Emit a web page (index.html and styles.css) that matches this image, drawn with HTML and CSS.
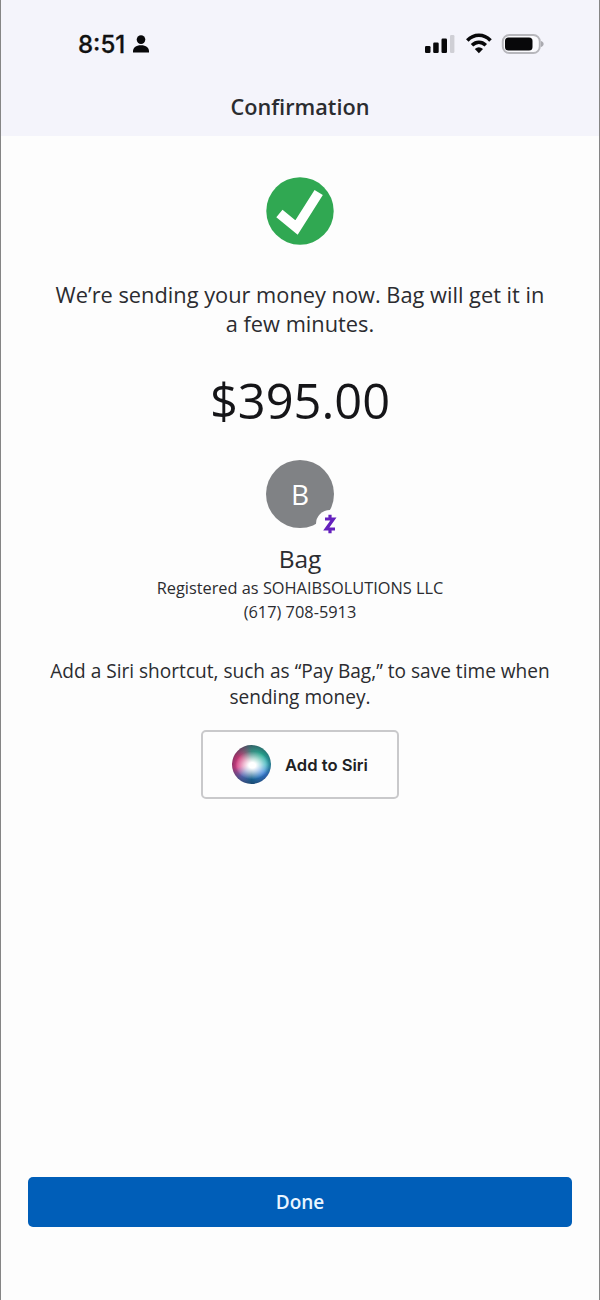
FILE: index.html
```html
<!DOCTYPE html>
<html lang="en">
<head>
<meta charset="utf-8">
<title>Confirmation</title>
<link rel="stylesheet" href="styles.css">
</head>
<body>
<div class="screen">
  <header class="header">
    <div class="status">
      <div class="clock">
        <span class="time">8:51</span>
        <svg class="person" width="18" height="18" viewBox="0 0 18 18"><circle cx="9" cy="4.600" r="4.300"/><path d="M1 17.500C.6 12.500 4 10.300 9 10.300S17.400 12.500 17 17.500Z"/></svg>
      </div>
      <svg class="indicators" width="122" height="24" viewBox="0 0 122 24">
        <rect x="1" y="14" width="5.500" height="7" rx="1.200"/>
        <rect x="9.200" y="10.500" width="5.500" height="10.500" rx="1.200"/>
        <rect x="17.500" y="6.500" width="5.500" height="14.500" rx="1.200"/>
        <rect class="dim" x="26" y="3" width="4.400" height="18" rx="1.200"/>
        <g class="waves"><path d="M43.300 8.400C50 1.600 59.800 1.600 66.500 8.400"/><path d="M48 13.300C52.300 9.300 57.500 9.300 61.800 13.300"/></g>
        <path d="M50.800 17Q54.900 13.400 59 17L54.900 21.200Z"/>
        <rect class="outline" x="78.800" y="3" width="37" height="18" rx="6.500"/>
        <rect x="81" y="5.500" width="27.500" height="13" rx="3.500"/>
        <path class="nub" d="M117 9V15C120.500 14 120.500 10 117 9Z"/>
      </svg>
    </div>
    <h1 class="title">Confirmation</h1>
  </header>
  <main class="content">
    <svg class="success" width="68" height="68" viewBox="0 0 68 68"><circle cx="34" cy="34" r="33.700" fill="#30a852"/><path d="M13.400 36.500L30.500 50.500L52.700 15.500" fill="none" stroke="#fff" stroke-width="9.800"/></svg>
    <p class="message">We’re sending your money now. Bag will get it in<br>a few minutes.</p>
    <p class="amount">$395.00</p>
    <div class="avatar">B
      <span class="badge"><svg width="14" height="20" viewBox="0 0 14 20"><path d="M2 5H10.400L3.300 15H12M7 .8V5M7 15V19.200" fill="none" stroke="#6420bd" stroke-width="3.200"/></svg></span>
    </div>
    <h2 class="name">Bag</h2>
    <p class="details">Registered as SOHAIBSOLUTIONS LLC<br>(617) 708-5913</p>
    <p class="hint">Add a Siri shortcut, such as “Pay Bag,” to save time when<br>sending money.</p>
    <button class="siri"><span class="orb"></span><span>Add to Siri</span></button>
  </main>
  <footer class="footer"><button class="done">Done</button></footer>
</div>
</body>
</html>
```
FILE: styles.css
```css
* { box-sizing: border-box; }
body { margin: 0; font-family: "Open Sans", sans-serif; color: #2b2c30; background: #fdfdfd; }
h1, h2, p { margin: 0; font-weight: 400; }
button { font: inherit; margin: 0; padding: 0; }
svg { display: block; }
.screen { width: 600px; height: 1300px; border: solid #858585; border-width: 0 1px; display: flex; flex-direction: column; background: #fdfdfd; }
.header { height: 136px; background: #f4f4fb; }
.status { display: flex; justify-content: space-between; align-items: center; height: 88px; padding: 0 53px 0 77px; }
.clock { display: flex; align-items: center; gap: 7px; color: #111; }
.time { font: 500 24px/30px Inter, sans-serif; -webkit-text-stroke: 0.300px; padding-top: 1px; }
.indicators, .person { fill: #08080a; }
.dim { fill: #cfcfd5; }
.waves { fill: none; stroke: #08080a; stroke-width: 3.600; }
.outline { fill: #fafafd; stroke: #b7b7bc; stroke-width: 2; }
.nub { fill: #aaaab0; }
.title { font-size: 21.700px; font-weight: 600; line-height: 38px; text-align: center; }
.content { flex: 1; display: flex; flex-direction: column; align-items: center; text-align: center; white-space: nowrap; padding-top: 41px; }
.message { margin-top: 35px; font-size: 21.800px; line-height: 29px; }
.amount { margin-top: 32px; font-size: 48.800px; line-height: 60px; color: #151518; }
.avatar { position: relative; width: 68px; height: 68px; margin-top: 30px; border-radius: 50%; background: #808285; color: #fff; font-size: 28px; line-height: 68px; }
.badge { position: absolute; left: 50px; top: 50px; width: 28px; height: 28px; border-radius: 50%; background: #fdfdfd; display: grid; place-items: center; }
.name { margin-top: 14px; font-size: 24.500px; line-height: 34px; }
.details { font-size: 16.350px; line-height: 24px; }
.hint { margin-top: 34px; font-size: 19.080px; line-height: 26px; }
.siri { display: flex; align-items: center; gap: 14px; width: 198px; height: 69px; margin-top: 20px; padding-left: 29px; border: 2px solid #c9c9cb; border-radius: 5px; background: #fdfdfd; color: #202124; font: 600 16.600px/24px Inter, sans-serif; }
.orb { width: 39px; height: 39px; border-radius: 50%; background: radial-gradient(ellipse 17px 14px at 52% 52%, #fff 20%, rgba(255,255,255,.65) 50%, transparent), radial-gradient(circle, transparent 50%, rgba(35,35,65,.4) 72%), conic-gradient(#39887f, #25aa91 50deg, #31b0bd 90deg, #347fdb 125deg, #17618e 180deg, #5865af 220deg, #d83f86 260deg, #c93975 300deg, #786176 335deg, #39887f); }
.footer { padding: 0 27px 73px; }
.done { display: block; width: 100%; height: 50px; border: 0; border-radius: 5px; background: #005eb8; color: #e9f5ff; font-size: 19px; font-weight: 600; line-height: 51px; }
```
